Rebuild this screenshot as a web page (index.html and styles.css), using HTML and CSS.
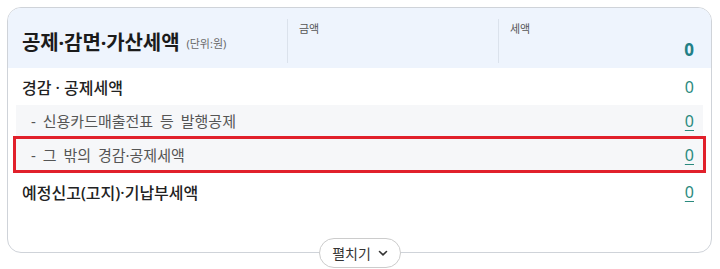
FILE: index.html
```html
<!DOCTYPE html>
<html>
<head>
<title>공제·감면·가산세액</title>
<link rel="stylesheet" href="styles.css">
</head>
<body>

<div class="tax-card">
  <div class="tax-head">
    <div class="head-title">
      <h2>공제·감면·가산세액</h2>
      <span class="unit">(단위:원)</span>
    </div>
    <div class="head-col">
      <span class="col-label">금액</span>
    </div>
    <div class="head-col">
      <span class="col-label">세액</span>
      <span class="col-value">0</span>
    </div>
  </div>

  <div class="tax-body">
    <div class="row main">
      <span class="row-name">경감 · 공제세액</span>
      <span class="amount">0</span>
    </div>
    <div class="row sub">
      <span class="row-name">- 신용카드매출전표 등 발행공제</span>
      <a href="#" class="amount">0</a>
    </div>
    <div class="row sub marked">
      <span class="row-name">- 그 밖의 경감·공제세액</span>
      <a href="#" class="amount">0</a>
    </div>
    <div class="row main">
      <span class="row-name">예정신고(고지)·기납부세액</span>
      <a href="#" class="amount">0</a>
    </div>
  </div>

  <button type="button" class="expand-button">펼치기
    <svg width="10" height="10" viewBox="0 0 10 10"><path d="M1.5 3.5 L5 6.8 L8.5 3.5" fill="none" stroke="#333" stroke-width="1.6" stroke-linecap="round" stroke-linejoin="round"/></svg>
  </button>
</div>

</body>
</html>
```

FILE: styles.css
```css
html, body {height: 269px;}
body {margin: 0; padding: 7px 8px 0 7px; box-sizing: border-box; overflow: hidden; background: #fff; font-family: "Noto Sans", "Noto Sans CJK KR", sans-serif; color: #222;}
.tax-card {position: relative; height: 246px; border: 1px solid #cfd3d9; border-radius: 14px; box-sizing: border-box; background: #fff;}
.tax-head {display: flex; height: 60px; background: #eef4fd; border-radius: 13px 13px 0 0;}
.head-title {flex: 0 0 280px; display: flex; align-items: center; padding-left: 14px; box-sizing: border-box; border-right: 1px solid #dbe2ec; margin: 11px 0 5px;}
.head-title h2 {margin: 0; font-size: 20px; font-weight: 700; color: #1b1b1b; letter-spacing: -0.1px;}
.unit {font-size: 11px; color: #6a6a6a; margin: 4px 0 0 7px;}
.head-col {flex: 0 0 211px; display: flex; flex-direction: column; justify-content: space-between; padding: 3px 0 4px 11px; box-sizing: border-box; border-right: 1px solid #dbe2ec; margin: 11px 0 5px;}
.head-col:last-child {flex: 1; border-right: 0; padding-right: 17px;}
.col-label {font-size: 11px; color: #555; line-height: 13px;}
.col-value {align-self: flex-end; font-size: 17px; font-weight: 700; color: #227f86; line-height: 18px;}
.tax-body {padding: 0 8px;}
.row {display: flex; align-items: center; justify-content: space-between; padding: 0 9px 0 6px;}
.row.main {height: 37px;}
.row.main .row-name {font-size: 16px; font-weight: 500; color: #222;}
.row.sub {height: 31px; margin-bottom: 3px; background: #f6f7f9; padding-left: 15px;}
.row.sub .row-name {font-size: 15px; color: #555; word-spacing: 3px;}
.row.marked {outline: 3px solid #e1202b;}
.amount {font-size: 16px; color: #2b8a7e; text-decoration: none;}
a.amount {text-decoration: underline; text-underline-offset: 3px;}
.expand-button {position: absolute; left: 311px; bottom: -16px; height: 30px; width: 82px; border: 1px solid #ccc; border-radius: 16px; background: #fff; font-family: inherit; font-size: 14px; color: #333; display: flex; align-items: center; justify-content: center; gap: 7px; padding: 0; cursor: pointer;}
```
